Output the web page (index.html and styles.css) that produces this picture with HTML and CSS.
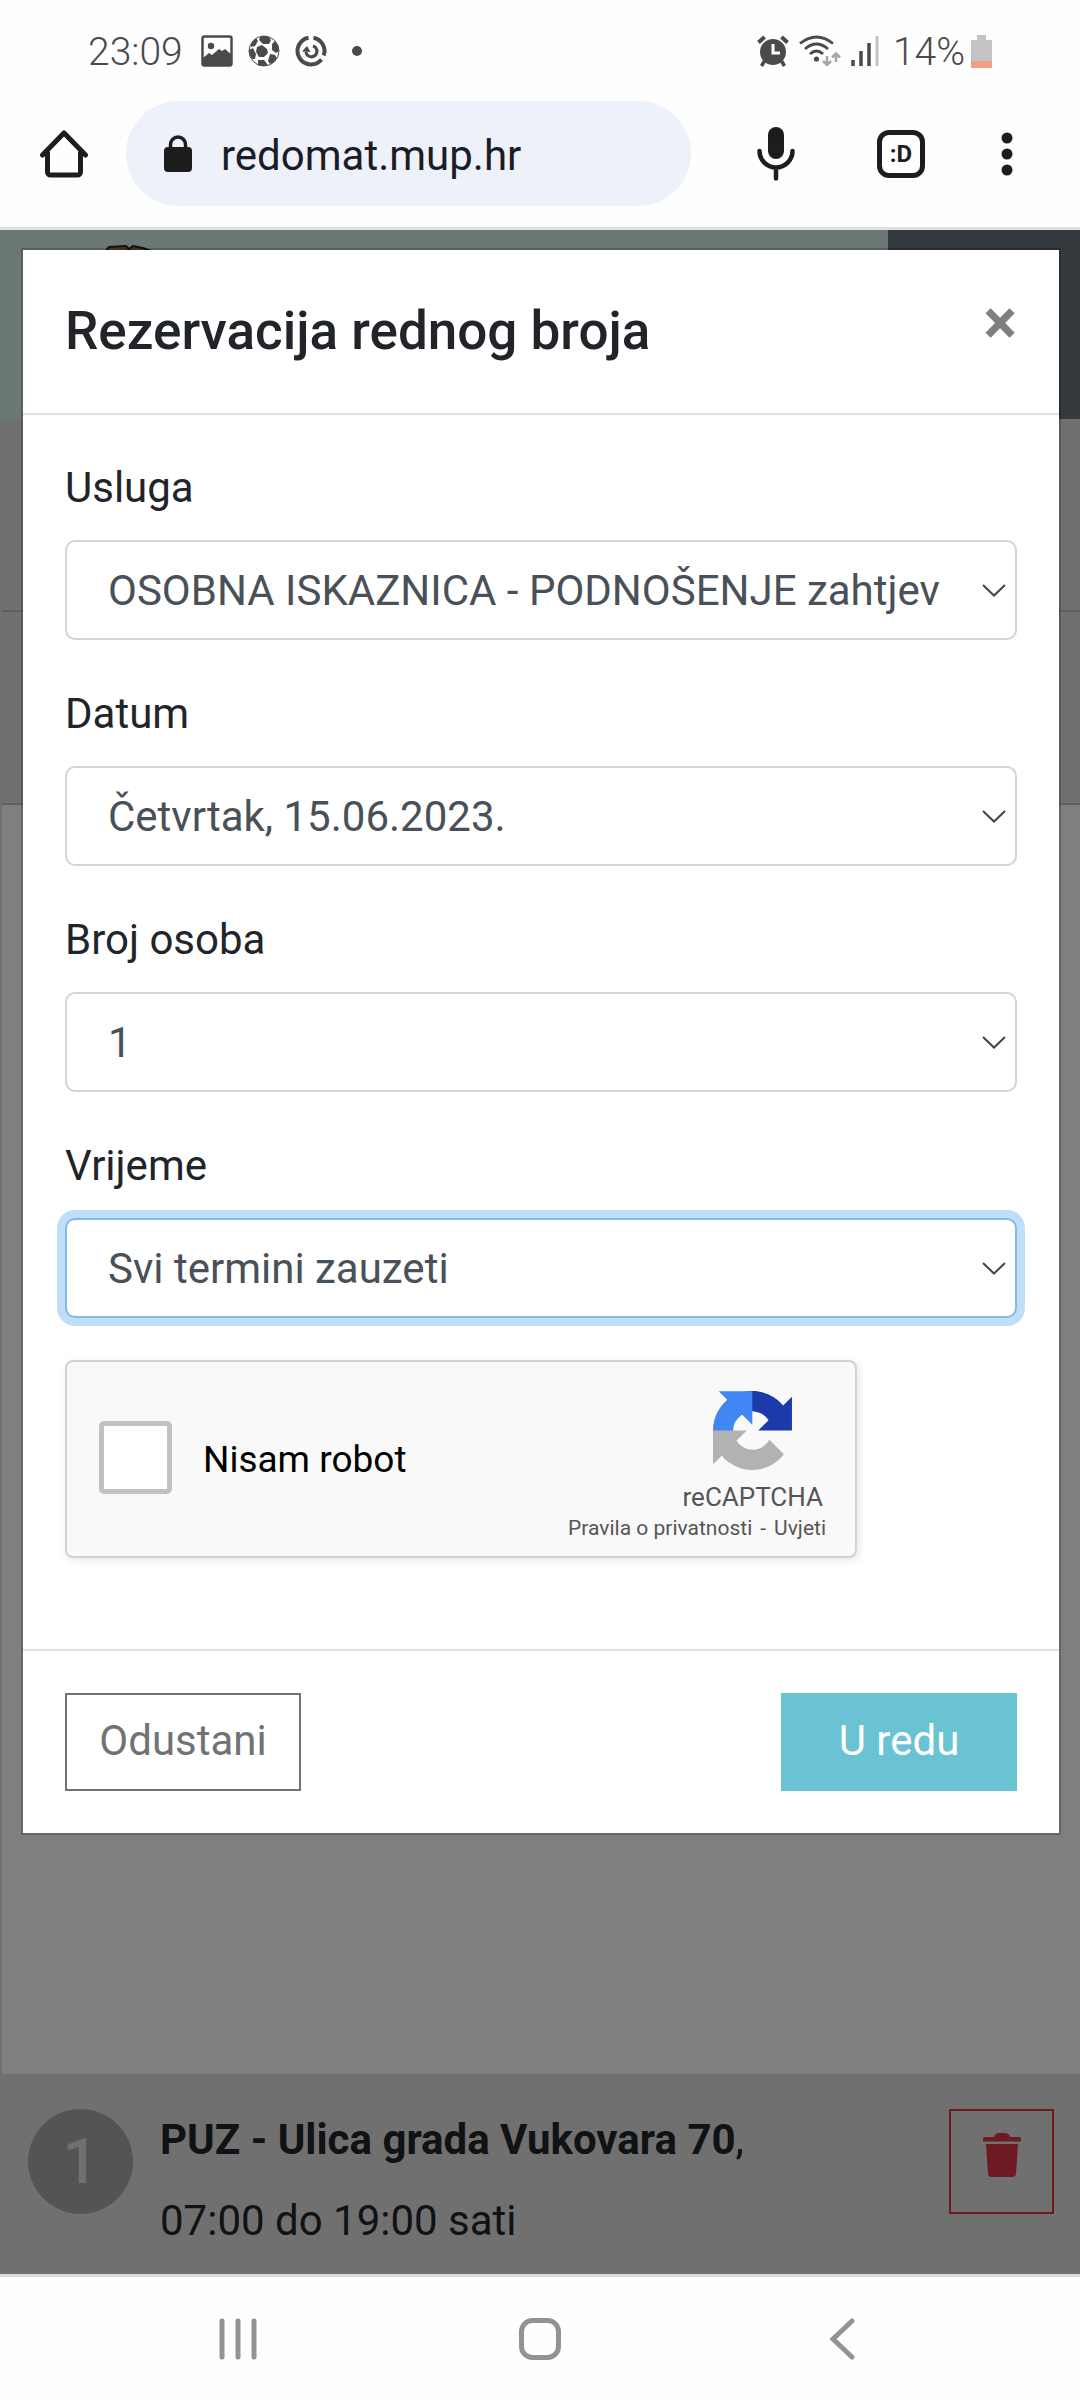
FILE: index.html
```html
<!DOCTYPE html>
<html lang="hr">
<head>
  <meta charset="utf-8">
  <meta name="viewport" content="width=device-width, initial-scale=1">
  <title>Rezervacija rednog broja</title>
  <link rel="stylesheet" href="styles.css">
</head>
<body>
  <header class="status">
    <div class="status-left">
      <span class="status-text">23:09</span>
      <svg class="status-icon" viewBox="0 0 32 32" aria-hidden="true">
        <rect x="1.500" y="1.500" width="29" height="29" rx="2" fill="none" stroke="#4a4a4a" stroke-width="2.500"/>
        <circle cx="10" cy="11" r="3.200" fill="#4a4a4a"/>
        <path d="M2 23 8 18l3 2 7-6 3 2 3-2 7 6v9a2 2 0 0 1-2 2H3a2 2 0 0 1-1-2z" fill="#4a4a4a"/>
      </svg>
      <svg class="status-icon" viewBox="0 0 32 32" aria-hidden="true">
        <circle cx="16" cy="16" r="15" fill="#fff" stroke="#4a4a4a" stroke-width="1"/>
        <g fill="#4a4a4a">
          <path d="M9 12 14 10l5 4 1 4-4 4-5 0-3-5z"/>
          <path d="M12 2q4-2 9 0l2 3-2 4-6 0-4-4z"/>
          <path d="M24 9l3-3q4 4 4 10l-3 2-4-3z"/>
          <path d="M22 19l5 1 2 3q-3 5-7 6l-2-3z"/>
          <path d="M10 25l6 0 4 5q-5 2-10 0z"/>
          <path d="M1 15l4-2 3 6-1 5-3 0Q1 20 1 15z"/>
          <path d="M3 9l5-6 2 3-3 5-4 1z"/>
        </g>
      </svg>
      <svg class="status-icon" viewBox="0 0 32 32" aria-hidden="true">
        <g fill="none" stroke="#4a4a4a" stroke-width="4">
          <path d="M18.500 2.700A13.500 13.500 0 0 1 28.700 20.500"/>
          <path d="M26.500 24.500A13.500 13.500 0 1 1 13.500 2.700"/>
          <path d="M18 11a5.500 5.500 0 1 1-7 6" stroke-width="3.200"/>
        </g>
        <path d="M7 16.500l5-5.500 3.500 6z" fill="#4a4a4a"/>
      </svg>
      <span class="status-dot"></span>
    </div>
    <div class="status-right">
      <svg class="status-icon" viewBox="0 0 32 32" aria-hidden="true">
        <circle cx="16" cy="17" r="13" fill="#4a4a4a"/>
        <path d="M1.500 7.500l6-5.500M30.500 7.500l-6-5.500" stroke="#4a4a4a" stroke-width="4"/>
        <path d="M7.500 26l-3 5M24.500 26l3 5" stroke="#4a4a4a" stroke-width="3.500"/>
        <path d="M16 9v9h7" fill="none" stroke="#fff" stroke-width="3"/>
      </svg>
      <svg class="wifi" viewBox="0 0 42 32" aria-hidden="true">
        <g fill="none" stroke="#4a4a4a" stroke-width="2.800">
          <path d="M1 8.500Q17.500-4.500 34 8.500"/>
          <path d="M6 14Q17.500 4 29 14"/>
          <path d="M11 19Q17.500 13 24 19"/>
        </g>
        <circle cx="17.500" cy="24" r="2.600" fill="#4a4a4a"/>
        <path d="M28 21v9m-4-4l4 4 4-4M37 27v-8m-4 3.500l4-4 4 4" fill="none" stroke="#a6a6a6" stroke-width="2.500"/>
      </svg>
      <svg class="signal" viewBox="0 0 28 30" aria-hidden="true">
        <path d="M2 24v6M10 15v15M18 7v23" stroke="#4a4a4a" stroke-width="3.500"/>
        <path d="M26 0v30" stroke="#c2c2c2" stroke-width="3"/>
      </svg>
      <span class="status-text">14%</span>
      <svg class="battery" viewBox="0 0 21 33" aria-hidden="true">
        <path d="M6 0h9v5h6v28H0V5h6z" fill="#c3c3c3"/>
        <path d="M0 26h21v7H0z" fill="#f0a084"/>
      </svg>
    </div>
  </header>

  <nav class="toolbar" aria-label="Preglednik">
    <button class="tool home" aria-label="Početna">
      <svg width="48" height="48" viewBox="0 0 48 48"><path d="M2.500 25 24 3l21.500 22M7.500 23v19a3 3 0 0 0 3 3h27a3 3 0 0 0 3-3V23" fill="none" stroke="#1d1d1d" stroke-width="5" stroke-linecap="round" stroke-linejoin="round"/></svg>
    </button>
    <label class="address">
      <svg width="30" height="38" viewBox="0 0 30 38" aria-hidden="true"><rect x="1" y="12" width="28" height="25" rx="4" fill="#1d1d1d"/><path d="M7.500 14V9.500a7.500 7.500 0 0 1 15 0V14" fill="none" stroke="#1d1d1d" stroke-width="3.500"/></svg>
      <input type="text" value="redomat.mup.hr" aria-label="Adresa">
    </label>
    <button class="tool mic" aria-label="Glasovno pretraživanje">
      <svg width="38" height="54" viewBox="0 0 38 54"><rect x="11" y="0" width="16" height="32" rx="8" fill="#1d1d1d"/><path d="M2.500 24a16.500 16.500 0 0 0 33 0M19 41v10.500" fill="none" stroke="#1d1d1d" stroke-width="4.500" stroke-linecap="round"/></svg>
    </button>
    <button class="tool tabs" aria-label="Kartice">:D</button>
    <button class="tool more" aria-label="Izbornik">
      <svg width="12" height="44" viewBox="0 0 12 44"><g fill="#1d1d1d"><circle cx="6" cy="6" r="5.500"/><circle cx="6" cy="22" r="5.500"/><circle cx="6" cy="38" r="5.500"/></g></svg>
    </button>
  </nav>

  <div class="viewport">
    <main class="page">
      <div class="site-header">
        <div class="brand">
          <svg width="46" height="64" viewBox="0 0 46 64" aria-hidden="true"><path d="M1 4 3 2 20 1l3 3 4-3 10 2 8 3v8l-5 6v22L23 62 6 42V18L2 12z" fill="#a07850" stroke="#222" stroke-width="2"/></svg>
        </div>
        <div class="site-menu"></div>
      </div>
      <div class="office">
        <div class="office-row"></div>
        <div class="office-row"></div>
        <div class="office-space"></div>
        <div class="ticket">
          <span class="ticket-number">1</span>
          <p class="ticket-text"><b>PUZ - Ulica grada Vukovara 70</b>,<br>07:00 do 19:00 sati</p>
          <button class="ticket-delete" aria-label="Obriši">
            <svg width="38" height="44" viewBox="0 0 38 44"><path d="M1.500 4H11q1-4 5-4h6q4 0 5 4h9.500Q38 4 38 5.500v3H0v-3Q0 4 1.500 4zM3 11h32l-2 30q-.500 3-3.500 3h-21Q5.500 44 5 41z" fill="#dc3545"/></svg>
          </button>
        </div>
      </div>
    </main>

    <div class="backdrop">
      <form class="modal" role="dialog" aria-labelledby="modal-title">
        <div class="modal-header">
          <h1 class="modal-title" id="modal-title">Rezervacija rednog broja</h1>
          <button class="close" type="button" aria-label="Zatvori">×</button>
        </div>
        <div class="modal-body">
          <div class="field">
            <label for="usluga">Usluga</label>
            <div class="select">
              <select id="usluga"><option>OSOBNA ISKAZNICA - PODNOŠENJE zahtjev</option></select>
              <svg class="chevron" viewBox="0 0 24 13" aria-hidden="true"><path d="M1 1l11 10.500L23 1"/></svg>
            </div>
          </div>
          <div class="field">
            <label for="datum">Datum</label>
            <div class="select">
              <select id="datum"><option>Četvrtak, 15.06.2023.</option></select>
              <svg class="chevron" viewBox="0 0 24 13" aria-hidden="true"><path d="M1 1l11 10.500L23 1"/></svg>
            </div>
          </div>
          <div class="field">
            <label for="osobe">Broj osoba</label>
            <div class="select">
              <select id="osobe"><option>1</option></select>
              <svg class="chevron" viewBox="0 0 24 13" aria-hidden="true"><path d="M1 1l11 10.500L23 1"/></svg>
            </div>
          </div>
          <div class="field">
            <label for="vrijeme">Vrijeme</label>
            <div class="select">
              <select class="focused" id="vrijeme"><option>Svi termini zauzeti</option></select>
              <svg class="chevron" viewBox="0 0 24 13" aria-hidden="true"><path d="M1 1l11 10.500L23 1"/></svg>
            </div>
          </div>
          <div class="captcha">
            <input class="captcha-box" type="checkbox" id="robot">
            <label class="captcha-label" for="robot">Nisam robot</label>
            <div class="captcha-info">
              <div class="captcha-brand">
                <svg width="79" height="79" viewBox="0 0 64 64" aria-hidden="true">
                  <path fill="#1c3aa9" d="M64 31.955l-.033-1.370V4.687l-7.160 7.160C50.948 4.674 42.033.093 32.050.093c-10.400 0-19.622 4.960-25.458 12.640l11.736 11.860a15.550 15.550 0 0 1 4.754-5.334c2.050-1.600 4.952-2.906 8.968-2.906.485 0 .860.057 1.135.163 4.976.393 9.288 3.140 11.828 7.124l-8.307 8.307L64 31.953"/>
                  <path fill="#4285f4" d="M31.862.094l-1.370.033H4.594l7.160 7.160C4.580 13.147 0 22.060 0 32.046c0 10.400 4.960 19.622 12.640 25.458L24.500 45.768a15.550 15.550 0 0 1-5.334-4.754c-1.600-2.050-2.906-4.952-2.906-8.968 0-.485.057-.860.163-1.135.393-4.976 3.140-9.288 7.124-11.828l8.307 8.307L31.860.095"/>
                  <path fill="#b2b2b2" d="M.001 32.045l.033 1.370v25.898l7.160-7.160c5.860 7.173 14.774 11.754 24.760 11.754 10.400 0 19.622-4.960 25.458-12.640l-11.736-11.860a15.550 15.550 0 0 1-4.754 5.334c-2.050 1.600-4.952 2.906-8.968 2.906-.485 0-.860-.057-1.135-.163-4.976-.393-9.288-3.140-11.828-7.124l8.307-8.307c-10.522.040-22.400.066-27.295-.005"/>
                </svg>
                <span>reCAPTCHA</span>
              </div>
              <div class="captcha-links"><a href="#">Pravila o privatnosti</a><span>-</span><a href="#">Uvjeti</a></div>
            </div>
          </div>
        </div>
        <div class="modal-footer">
          <button class="btn btn-cancel" type="button">Odustani</button>
          <button class="btn btn-ok" type="submit">U redu</button>
        </div>
      </form>
    </div>
  </div>

  <nav class="system-nav" aria-label="Sustav">
    <button aria-label="Nedavno"><svg width="42" height="42" viewBox="0 0 42 42"><path d="M5 3v36M21 3v36M37 3v36"/></svg></button>
    <button aria-label="Početni zaslon"><svg width="42" height="42" viewBox="0 0 42 42"><rect x="2.500" y="2.500" width="37" height="37" rx="11"/></svg></button>
    <button aria-label="Natrag"><svg width="42" height="42" viewBox="0 0 42 42"><path d="M31 3 12 21l19 18"/></svg></button>
  </nav>
</body>
</html>
```
FILE: styles.css
```css
* {
  box-sizing: border-box;
}

body {
  display: flex;
  flex-direction: column;
  min-height: 100vh;
  margin: 0;
  background: #fefefe;
  color: #212529;
  font: 42px/63px Roboto, sans-serif;
}

button,
input,
select {
  margin: 0;
  padding: 0;
  border: 0;
  background: none;
  color: inherit;
  font: inherit;
}

svg {
  display: block;
}

/* Status bar */

.status {
  display: flex;
  justify-content: space-between;
  padding: 26px 88px 0;
  line-height: 50px;
}

.status-left,
.status-right {
  display: flex;
  align-items: center;
  gap: 15px;
}

.status-right {
  gap: 10px;
}

.status-text {
  padding-top: 2px;
  color: #4a4a4a;
  font-size: 39px;
  font-weight: 300;
  line-height: 48px;
}

.status-left .status-text {
  margin-right: 3px;
}

.status-right .status-text {
  margin: 0 -4px 0 4px;
}

.status-icon {
  width: 32px;
  height: 32px;
}

.status-dot {
  width: 10px;
  height: 10px;
  margin-left: 10px;
  border-radius: 50%;
  background: #4a4a4a;
}

.wifi {
  width: 42px;
  height: 32px;
}

.signal {
  width: 28px;
  height: 30px;
}

.battery {
  width: 21px;
  height: 33px;
}

/* Browser toolbar */

.toolbar {
  display: flex;
  align-items: center;
  padding: 25px 67px 21px 40px;
  border-bottom: 3px solid #dfe2e1;
}

.address {
  display: flex;
  flex: 1;
  align-items: center;
  gap: 28px;
  min-width: 0;
  height: 105px;
  margin: 0 66px 0 38px;
  padding: 0 37px;
  border-radius: 53px;
  background: #edf1fa;
}

.address input {
  flex: 1;
  min-width: 0;
  padding-top: 4px;
  color: #1b1c26;
}

.tabs {
  width: 48px;
  height: 48px;
  margin: 0 76px 0 82px;
  border: 5px solid #1d1d1d;
  border-radius: 12px;
  color: #1d1d1d;
  font-size: 24px;
  font-weight: 700;
  line-height: 36px;
}

/* Web page behind the dialog */

.viewport {
  display: grid;
  flex: 1;
}

.page,
.backdrop {
  grid-area: 1 / 1;
  min-width: 0;
}

.page {
  display: flex;
  flex-direction: column;
}

.site-header {
  display: flex;
  height: 189px;
}

.brand {
  flex: 1;
  padding: 15px 106px;
  background: #d8f0ea;
}

.site-menu {
  width: 192px;
  background: #68727c;
}

.office {
  display: flex;
  flex: 1;
  flex-direction: column;
  border-left: 2px solid #dedede;
  background: #fff;
}

.office-row {
  height: 193px;
  border-bottom: 2px solid #bebebe;
  background: #e3e0e0;
}

.office-space {
  flex: 1;
}

.ticket {
  display: flex;
  align-items: flex-start;
  gap: 27px;
  padding: 25px 26px 13px;
  background: #e1e1e1;
}

.ticket-number,
.ticket-delete {
  width: 105px;
  height: 105px;
  margin-top: 10px;
}

.ticket-number {
  border-radius: 50%;
  background: #a8a8a8;
  color: #e0e0e0;
  font-size: 63px;
  font-weight: 500;
  line-height: 105px;
  text-align: center;
}

.ticket-text {
  flex: 1;
  margin: 0;
  line-height: 81px;
}

.ticket-delete {
  display: flex;
  justify-content: center;
  padding-top: 22px;
  border: 2px solid #dc3545;
}

/* Dialog */

.backdrop {
  display: flex;
  align-items: flex-start;
  padding: 18px 19px 18px 21px;
  background: rgba(0, 0, 0, 0.5);
}

.modal {
  flex: 1;
  min-width: 0;
  border: 2px solid rgba(0, 0, 0, 0.2);
  background: #fff padding-box;
}

.modal-header {
  display: flex;
  justify-content: space-between;
  padding: 41px 42px 42px;
  border-bottom: 2px solid #dee2e6;
}

.modal-title {
  margin: 0;
  font-size: 53px;
  font-weight: 500;
  line-height: 80px;
}

.close {
  height: 63px;
  color: #7f7f7f;
  font-size: 63px;
  font-weight: 700;
  line-height: 63px;
}

.modal-body {
  padding: 41px 42px 91px;
}

.field {
  display: flex;
  flex-direction: column;
  gap: 21px;
  margin-bottom: 42px;
}

.select {
  display: grid;
  align-items: center;
}

.select select {
  grid-area: 1 / 1;
  width: 100%;
  height: 100px;
  padding: 0 70px 0 41px;
  border: 2px solid #d2d4d6;
  border-radius: 10px;
  background: #fff;
  color: #495057;
  appearance: none;
}

.select .focused {
  border-color: #86b9e2;
  box-shadow: 0 0 0 8px #bfdefa;
}

.chevron {
  grid-area: 1 / 1;
  justify-self: end;
  width: 24px;
  height: 13px;
  margin-right: 11px;
  fill: none;
  stroke: #444;
  stroke-width: 2;
  pointer-events: none;
}

.captcha {
  display: flex;
  align-items: center;
  width: 792px;
  max-width: 100%;
  height: 198px;
  padding: 0 29px 4px 32px;
  border: 2px solid #d3d3d3;
  border-radius: 8px;
  background: #f9f9f9;
  box-shadow: 2px 2px 8px rgba(0, 0, 0, 0.1);
}

.captcha-box {
  width: 73px;
  height: 73px;
  border: 5px solid #c1c1c1;
  border-radius: 5px;
  background: #fff;
  appearance: none;
}

.captcha-label {
  flex: 1;
  margin-left: 31px;
  padding-top: 4px;
  color: #000;
  font-size: 37px;
}

.captcha-info {
  display: flex;
  flex-direction: column;
  align-items: flex-end;
  padding-top: 18px;
  color: #555;
}

.captcha-brand {
  display: flex;
  flex-direction: column;
  align-items: center;
  gap: 10px;
  margin-right: 3px;
  font-size: 26px;
  line-height: 34px;
}

.captcha-links {
  display: flex;
  gap: 8px;
  font-size: 21px;
  line-height: 28px;
}

.captcha-links a {
  color: inherit;
  text-decoration: none;
}

.modal-footer {
  display: flex;
  justify-content: space-between;
  padding: 42px;
  border-top: 2px solid #dee2e6;
}

.btn {
  width: 236px;
  height: 98px;
  padding-bottom: 4px;
}

.btn-cancel {
  border: 2px solid #707376;
  color: #707376;
}

.btn-ok {
  background: #69c3d3;
  color: #fff;
}

/* System navigation */

.system-nav {
  display: grid;
  grid-template-columns: repeat(3, 1fr);
  height: 126px;
  padding: 0 87px;
  border-top: 3px solid #dcdcdc;
}

.system-nav button {
  display: grid;
  place-items: center;
}

.system-nav svg {
  fill: none;
  stroke: #939393;
  stroke-width: 5;
  stroke-linecap: round;
}
```
